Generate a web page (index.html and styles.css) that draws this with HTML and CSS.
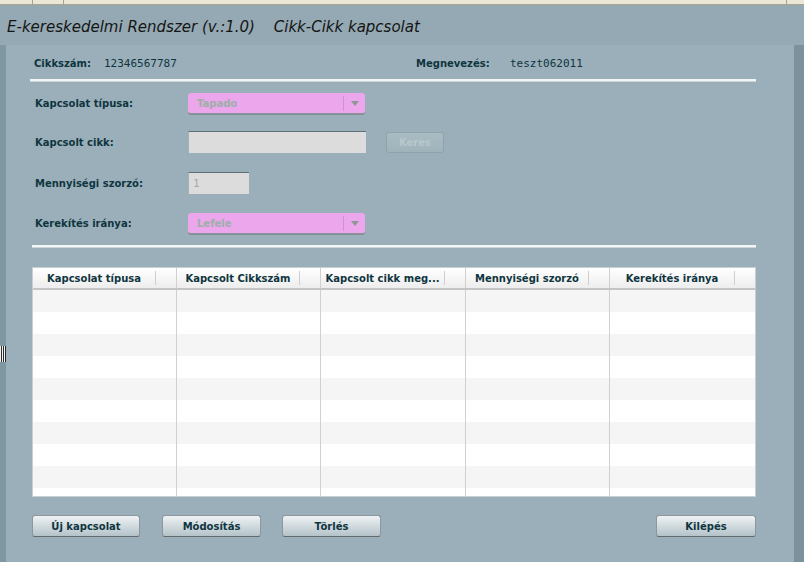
FILE: index.html
```html
<!DOCTYPE html>
<html lang="hu">
<head>
<meta charset="utf-8">
<title>Cikk-Cikk kapcsolat</title>
<link rel="stylesheet" href="styles.css">
</head>
<body>
<div class="tabstrip">
  <span class="tab t1"></span>
  <span class="tab t2"></span>
  <span class="tab t3"></span>
</div>
<header class="title">
  <span class="app">E-kereskedelmi Rendszer (v.:1.0)</span>
  <span class="page">Cikk-Cikk kapcsolat</span>
</header>
<div class="main">
  <div class="edge-left"><div class="grip"></div></div>
  <div class="panel">
    <div class="info">
      <span class="lbl info-l1">Cikkszám:</span>
      <span class="val info-v1">12346567787</span>
      <span class="lbl info-l2">Megnevezés:</span>
      <span class="val">teszt062011</span>
    </div>
    <div class="sep sep1"></div>
    <div class="form">
      <div class="row r21">
        <label class="lbl flabel">Kapcsolat típusa:</label>
        <div class="combo"><span class="combo-text">Tapado</span><span class="combo-div"></span><span class="combo-arrow"></span></div>
      </div>
      <div class="row r22">
        <label class="lbl flabel">Kapcsolt cikk:</label>
        <div class="input wide"></div>
        <div class="btn-dis">Keres</div>
      </div>
      <div class="row r22">
        <label class="lbl flabel">Mennyiségi szorzó:</label>
        <div class="input narrow">1</div>
      </div>
      <div class="row r21">
        <label class="lbl flabel">Kerekítés iránya:</label>
        <div class="combo"><span class="combo-text">Lefele</span><span class="combo-div"></span><span class="combo-arrow"></span></div>
      </div>
    </div>
    <div class="sep sep2"></div>
    <div class="grid">
      <div class="ghead">
        <div class="hc"><span>Kapcsolat típusa</span></div>
        <div class="hc"><span>Kapcsolt Cikkszám</span></div>
        <div class="hc"><span>Kapcsolt cikk meg...</span></div>
        <div class="hc"><span>Mennyiségi szorzó</span></div>
        <div class="hc"><span>Kerekítés iránya</span></div>
      </div>
      <div class="gbody">
        <div class="cols">
          <div class="col"></div><div class="col"></div><div class="col"></div><div class="col"></div><div class="col"></div>
        </div>
      </div>
    </div>
    <div class="buttons">
      <button class="btn b-new">Új kapcsolat</button>
      <button class="btn b-mod">Módosítás</button>
      <button class="btn b-del">Törlés</button>
      <span class="spacer"></span>
      <button class="btn b-exit">Kilépés</button>
    </div>
  </div>
  <div class="edge-right"></div>
</div>
</body>
</html>
```
FILE: styles.css
```css
* { box-sizing: border-box; }
html, body { margin: 0; padding: 0; }
body {
  width: 804px;
  height: 562px;
  overflow: hidden;
  background: #94a9b3;
  font-family: "DejaVu Sans", Verdana, sans-serif;
  color: #0f3540;
}
.tabstrip {
  height: 5px;
  background: #ebe8d8;
  border-bottom: 1px solid #aaa58f;
  display: flex;
}
.tab { display: block; height: 4px; border-right: 1px solid #a8a390; }
.t1 { width: 33px; }
.t2 { width: 31px; }
.t3 { width: 723px; }
.title {
  height: 40px;
  padding: 13px 0 0 7px;
  font-style: italic;
  font-size: 15px;
  color: #151515;
  white-space: nowrap;
}
.title .page { margin-left: 14px; }
.main {
  display: flex;
  height: 517px;
}
.edge-left {
  width: 6px;
  background: #7f97a1;
  padding-top: 301px;
}
.grip {
  height: 16px;
  background: repeating-linear-gradient(to right, #f2f2f2 0 1px, #2a2a2a 1px 2px);
}
.edge-right {
  width: 10px;
  background: #7b929c;
}
.panel {
  flex: 1;
  background: #9aafb9;
  padding: 0 38px 0 24px;
  display: flex;
  flex-direction: column;
}
.lbl {
  font-weight: bold;
  font-size: 10px;
  color: #0f3540;
}
.val {
  font-family: "DejaVu Sans Mono", monospace;
  font-size: 11px;
  color: #0f3540;
}
.info {
  display: flex;
  align-items: center;
  height: 20px;
  margin-top: 8px;
  padding-left: 4px;
}
.info-l1 { width: 70px; }
.info-v1 { width: 312px; }
.info-l2 { width: 94px; }
.sep {
  background: #f4f6f6;
  border-bottom: 1px solid #c9d5da;
  height: 3px;
}
.sep1 { margin: 6px 0 0 0; }
.sep2 { margin: 11px 0 0 2px; }
.form {
  display: flex;
  flex-direction: column;
  margin-top: 11px;
  padding-left: 5px;
}
.row { display: flex; align-items: center; }
.row:nth-child(1) { margin-bottom: 17px; }
.row:nth-child(2) { margin-bottom: 19px; }
.row:nth-child(3) { margin-bottom: 19px; }
.r21 { height: 21px; }
.r22 { height: 22px; }
.flabel { width: 153px; }
.combo {
  width: 177px;
  height: 21px;
  background: #eba6ec;
  border-radius: 3px;
  border-bottom: 1px solid #8c8f99;
  box-shadow: 0 1px 0 rgba(80,90,100,0.35);
  display: flex;
  align-items: center;
  padding-left: 9px;
}
.combo-text {
  flex: 1;
  font-size: 10px;
  font-weight: bold;
  color: #9cb0a7;
}
.combo-div {
  width: 1px;
  height: 15px;
  background: #c995cb;
  margin-right: 7px;
}
.combo-arrow {
  width: 0; height: 0;
  border-left: 4px solid transparent;
  border-right: 4px solid transparent;
  border-top: 5px solid #8e9796;
  margin-right: 6px;
}
.input {
  height: 22px;
  background: #dcdcdc;
  border-top: 1px solid #5f6f74;
  border-left: 1px solid #a8b0b3;
  font-family: "DejaVu Sans Mono", monospace;
  font-size: 11px;
  color: #a8a8a8;
  padding: 4px 0 0 4px;
}
.wide { width: 178px; }
.narrow { width: 61px; }
.btn-dis {
  margin-left: 20px;
  width: 58px;
  height: 21px;
  border: 1px solid #8fa3ab;
  border-radius: 3px;
  background: linear-gradient(#a9bcc4, #9fb3bb);
  color: #b8c7cc;
  font-size: 10px;
  font-weight: bold;
  display: flex;
  align-items: center;
  justify-content: center;
}
.grid {
  margin-top: 19px;
  margin-left: 2px;
  width: 724px;
  height: 230px;
  background: #ffffff;
  border: 1px solid #c9ced0;
  display: flex;
  flex-direction: column;
}
.ghead {
  display: grid;
  grid-template-columns: 144px 144px 145px 144px 145px;
  height: 22px;
  background: linear-gradient(#ffffff, #ededed);
  border-bottom: 2px solid #c4c4c4;
}
.hc {
  border-right: 1px solid #d0d0d0;
  padding-right: 21px;
  display: flex;
  align-items: center;
  justify-content: center;
  position: relative;
  font-size: 10px;
  font-weight: bold;
  color: #0f3540;
  white-space: nowrap;
}
.hc:last-child { border-right: none; }
.hc::after {
  content: "";
  position: absolute;
  right: 20px;
  top: 3px;
  bottom: 3px;
  width: 1px;
  background: #cfcfcf;
}
.gbody {
  flex: 1;
  background: repeating-linear-gradient(#f5f5f5 0 22px, #ffffff 22px 44px);
}
.cols {
  display: grid;
  grid-template-columns: 144px 144px 145px 144px 145px;
  height: 100%;
}
.col { border-right: 1px solid #d0d0d0; }
.col:last-child { border-right: none; }
.buttons {
  display: flex;
  margin-top: 18px;
  margin-left: 2px;
  width: 724px;
}
.btn {
  height: 22px;
  border: 1px solid #8c989e;
  border-bottom-color: #626a6e;
  border-radius: 3px;
  background: linear-gradient(#eef2f3, #b4c3c9);
  font-family: "DejaVu Sans", Verdana, sans-serif;
  font-size: 10px;
  font-weight: bold;
  color: #0f3540;
  padding: 0;
}
.b-new { width: 108px; }
.b-mod { width: 99px; margin-left: 22px; }
.b-del { width: 99px; margin-left: 21px; }
.spacer { flex: 1; }
.b-exit { width: 100px; }
```
